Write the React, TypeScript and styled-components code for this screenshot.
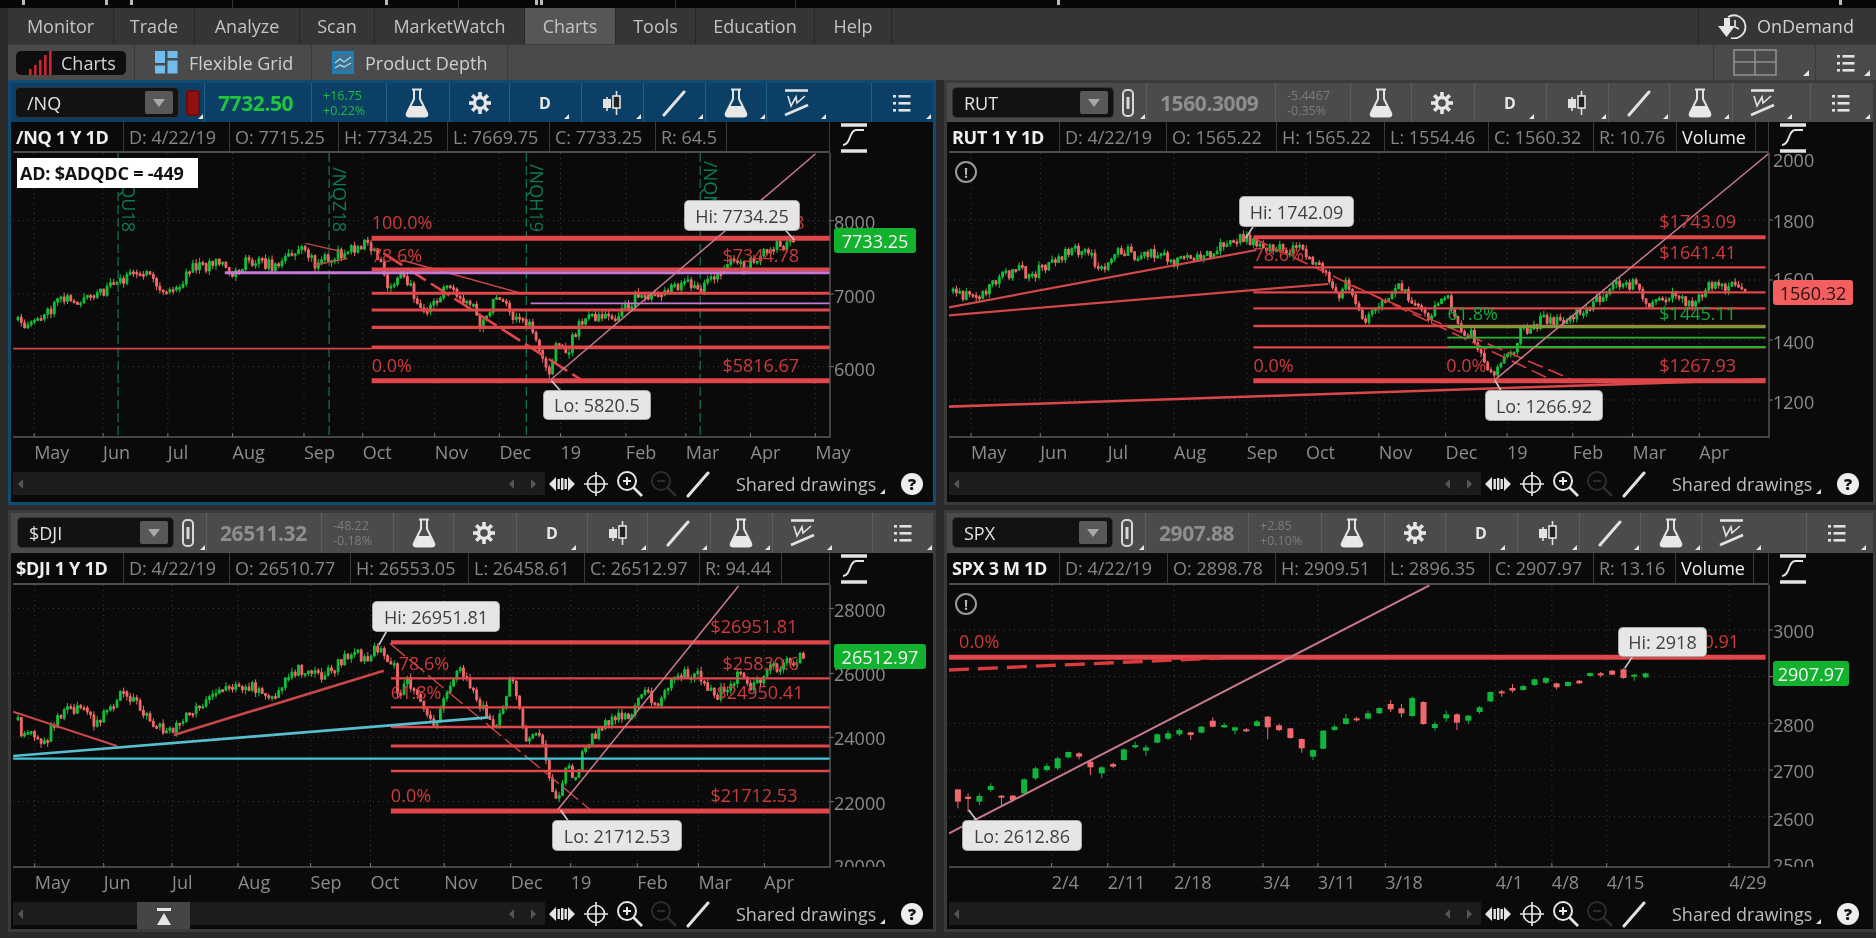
import React from "react";
import styled, { createGlobalStyle } from "styled-components";

const Global = createGlobalStyle`
  html, body { margin: 0; padding: 0; background: #2a2a2a; overflow: hidden; }
  * { box-sizing: border-box; }
  #root { width: 1876px; height: 938px; }
`;

const FONT = `"Open Sans", "Noto Sans", "Liberation Sans", sans-serif`;

const Page = styled.div`
  width: 1876px; height: 938px; background: #2b2b2b; font-family: ${FONT};
  font-size: 18px; color: #c8c8c8; display: flex; flex-direction: column; overflow: hidden;
  filter: blur(0.45px);
`;
const TopStrip = styled.svg`display: block; width: 1876px; height: 8px; background: #060606; flex: none;`;
const Main = styled.div`padding-left: 8px; display: flex; flex-direction: column; flex: 1;`;
const NavBar = styled.div`height: 36px; background: #353535; display: flex; flex: none;`;
const NavTab = styled.div<{ $w: number; $active?: boolean }>`
  width: ${p => p.$w}px; display: flex; align-items: center; justify-content: center;
  color: #c4c4c4; background: ${p => (p.$active ? "#565656" : "transparent")};
  border-right: 1px solid #272727;
`;
const NavSpacer = styled.div`flex: 1;`;
const OnDemandTab = styled.div`
  width: 178px; display: flex; align-items: center; gap: 10px; padding-left: 18px;
  border-left: 1px solid #272727; color: #d0d0d0;
`;
const SubBar = styled.div`height: 36px; background: #4a4a4a; display: flex; flex: none; border-top: 1px solid #3a3a3a;`;
const SubCell = styled.div<{ $w: number }>`
  width: ${p => p.$w}px; display: flex; align-items: center; gap: 11px; padding-left: 20px;
  border-right: 1px solid #3a3a3a; color: #cfcfcf;
`;
const PillCell = styled.div`width: 127px; display: flex; align-items: center; padding-left: 8px; border-right: 1px solid #3a3a3a;`;
const Pill = styled.div`
  width: 110px; height: 24px; background: #0e0e0e; border-radius: 5px; display: flex; align-items: center;
  gap: 9px; padding-left: 12px; color: #d4d4d4;
`;
const LayoutCell = styled.div<{ $w: number; $pr?: number }>`
  position: relative; width: ${p => p.$w}px; display: flex; align-items: center; justify-content: center;
  padding-right: ${p => p.$pr ?? 0}px; border-left: 1px solid #3a3a3a;
`;
const Corner = styled.span`
  position: absolute; right: 6px; bottom: 4px; width: 0; height: 0;
  border-left: 6px solid transparent; border-bottom: 6px solid #e6e6e6;
`;
const PanelGrid = styled.div`
  display: grid; grid-template-columns: 928px 932px; grid-template-rows: 425px 422px;
  column-gap: 8px; row-gap: 5px;
`;
const PanelBox = styled.div<{ $active?: boolean }>`
  border: 3px solid ${p => (p.$active ? "#0f4a70" : "#3b3b3b")}; background: #0a0a0a;
  display: flex; flex-direction: column; overflow: hidden;
`;
const Toolbar = styled.div<{ $active?: boolean; $h: number; $pad: number }>`
  height: ${p => p.$h}px; padding-left: ${p => p.$pad}px; flex: none; display: flex; align-items: stretch;
  background: ${p => (p.$active ? "#0b3f65" : "#4b4b4b")};
  --sep: ${p => (p.$active ? "#20618c" : "#5e5e5e")};
`;
const SymbolBox = styled.div<{ $w: number }>`
  width: ${p => p.$w}px; height: 29px; margin-top: 5px; background: #121212; border-radius: 4px;
  box-shadow: 0 0 0 1px #333; display: flex; align-items: center; justify-content: space-between;
  padding: 0 5px 0 11px; color: #e2e2e2;
`;
const DropBtn = styled.span`
  width: 28px; height: 23px; background: #585858; border-radius: 2px; display: flex; align-items: center; justify-content: center;
  &::after { content: ""; border-left: 6px solid transparent; border-right: 6px solid transparent; border-top: 8px solid #a8a8a8; }
`;
const LockCell = styled.div<{ $w: number }>`
  position: relative; width: ${p => p.$w}px; flex: none; display: flex; align-items: center; padding-left: 8px;
  border-right: 1px solid var(--sep);
`;
const RedLock = styled.span`width: 14px; height: 26px; background: #8f1212; border-radius: 3px; box-shadow: inset 0 0 0 2px #6e0c0c;`;
const CornerSmall = styled.span`
  position: absolute; right: 1px; bottom: 3px; width: 0; height: 0;
  border-left: 5px solid transparent; border-bottom: 5px solid #e6e6e6;
`;
const PriceCell = styled.div<{ $w: number; $live?: boolean }>`
  width: ${p => p.$w}px; flex: none; display: flex; align-items: center; padding-left: 13px;
  border-right: 1px solid var(--sep); font-weight: 700; font-size: 21px; letter-spacing: -0.4px;
  color: ${p => (p.$live ? "#1fc63d" : "#8e8e8e")};
`;
const ChangeCell = styled.div<{ $w: number; $live?: boolean }>`
  width: ${p => p.$w}px; flex: none; display: flex; flex-direction: column; justify-content: center; padding-left: 11px;
  border-right: 1px solid var(--sep); font-size: 12.5px; line-height: 15px;
  color: ${p => (p.$live ? "#22b845" : "#7c7c7c")};
`;
const ToolCell = styled.div<{ $w?: number }>`
  ${p => (p.$w ? `width: ${p.$w}px; flex: none; border-right: 1px solid var(--sep);` : "flex: 1;")}
  display: flex;
`;
const ToolSlot = styled.div<{ $corner?: boolean }>`
  position: relative; width: 60px; display: flex; align-items: center; justify-content: center;
  color: #e2e2e2;
  ${p => p.$corner && `&::after { content: ""; position: absolute; right: 1px; bottom: 3px;
    border-left: 5px solid transparent; border-bottom: 5px solid #e6e6e6; }`}
`;
const DLetter = styled.span`font-weight: 700; font-size: 16px; color: #e8e8e8; margin-left: 10px;`;
const InfoRow = styled.div<{ $h: number }>`height: ${p => p.$h}px; flex: none; display: flex; padding-left: 2px; background: #0a0a0a;`;
const InfoBar = styled.div`display: flex; border-bottom: 2px solid #4c4c4c; flex: none;`;
const InfoCell = styled.div<{ $w: number; $title?: boolean; $white?: boolean }>`
  width: ${p => p.$w}px; flex: none; display: flex; align-items: center; padding-left: ${p => (p.$title ? 3 : 5)}px; white-space: nowrap;
  border-right: 1px solid #3a3a3a; overflow: hidden;
  color: ${p => (p.$title || p.$white ? "#efefef" : "#858585")}; font-weight: ${p => (p.$title ? 700 : 400)};
  font-size: 18px; letter-spacing: ${p => (p.$title ? "-0.3px" : "0")};
`;
const InfoBarFill = styled.div<{ $w: number }>`
  width: ${p => p.$w}px; flex: none; border-bottom: 2px solid #4c4c4c; border-right: 1px solid #3a3a3a;
`;
const SideCol = styled.div`flex: 1; display: flex; align-items: center; padding-left: 10px; background: #0a0a0a; color: #ddd;`;
const ChartArea = styled.div<{ $h: number }>`position: relative; height: ${p => p.$h}px; flex: none;`;
const ChartSvg = styled.svg`
  display: block; font-family: ${FONT}; font-size: 18px;
`;
const Callout = styled.div<{ $l: number; $t: number; $w: number; $h: number }>`
  position: absolute; left: ${p => p.$l}px; top: ${p => p.$t}px; width: ${p => p.$w}px; height: ${p => p.$h}px;
  background: #e6e6e6; color: #3f3f3f; border-radius: 4px; box-shadow: 0 0 0 1px #aaa;
  display: flex; align-items: center; justify-content: center; white-space: nowrap;
`;
const PriceTag = styled.div<{ $l: number; $t: number; $w: number; $up: boolean }>`
  position: absolute; left: ${p => p.$l}px; top: ${p => p.$t}px; width: ${p => p.$w}px; height: 25px;
  background: ${p => (p.$up ? "#12b22f" : "#f35f5f")}; color: ${p => (p.$up ? "#f4f4f4" : "#2a1010")};
  border-radius: 3px; display: flex; align-items: center; justify-content: center; white-space: nowrap;
`;
const AdBox = styled.div`
  position: absolute; left: 6px; top: 5px; width: 181px; height: 30px; background: #fff; color: #111;
  font-weight: 700; font-size: 18px; letter-spacing: -0.2px; display: flex; align-items: center; padding-left: 3px; white-space: nowrap;
`;
const AlertIcon = styled.div`
  position: absolute; left: 8px; top: 8px; width: 22px; height: 22px; border-radius: 50%;
  border: 2px solid #9a9a9a; color: #b8b8b8; display: flex; align-items: center; justify-content: center;
  font-size: 14px; font-weight: 700; background: #0a0a0a;
`;
const ScrollRow = styled.div<{ $h: number }>`height: ${p => p.$h}px; flex: none; display: flex; padding-left: 2px; background: #0a0a0a;`;
const Track = styled.div`
  position: relative; width: 532px; height: 23px; margin-top: 2px; background: #1c1c1c; display: flex; align-items: center;
  padding: 0 9px 0 5px; justify-content: space-between; flex: none;
`;
const ArrowGroup = styled.div`display: flex; gap: 17px;`;
const ArrowL = styled.span`width: 0; height: 0; border-top: 5px solid transparent; border-bottom: 5px solid transparent; border-right: 5px solid #555;`;
const ArrowR = styled.span`width: 0; height: 0; border-top: 5px solid transparent; border-bottom: 5px solid transparent; border-left: 5px solid #555;`;
const ExpandBtn = styled.div`
  position: absolute; left: 124px; top: 0; width: 53px; height: 30px; background: #454545; display: flex;
  align-items: center; justify-content: center;
`;
const BottomTool = styled.div`width: 34px; height: 27px; display: flex; align-items: center; justify-content: center; flex: none; color: #e0e0e0;`;
const SharedLabel = styled.div`margin-left: 21px; height: 27px; display: flex; align-items: center; color: #bdbdbd; white-space: nowrap; width: 148px; position: relative;`;
const HelpBall = styled.div`
  margin: 3px 0 0 17px; width: 22px; height: 22px; border-radius: 50%; background: #eee; color: #111;
  font-weight: 800; font-size: 16px; display: flex; align-items: center; justify-content: center; flex: none;
`;
const MiniTri = styled.span`
  position: absolute; right: -1px; bottom: 3px; border-left: 5px solid transparent; border-bottom: 5px solid #ddd;
`;

/* ---------- icons ---------- */
const Flask = () => (
  <svg width="26" height="30" viewBox="0 0 26 30">
    <path d="M8 1.500h10M10 2v9L3 25c-1 2 0 3.500 2 3.500h16c2 0 3-1.500 2-3.500L16 11V2" fill="none" stroke="#e2e2e2" strokeWidth="2" />
    <path d="M6.500 18h13L24 27c0 1-1 2-3 2H5c-2 0-3-1-3-2z" fill="#e8e8e8" />
  </svg>
);
const Gear = () => (
  <svg width="24" height="24" viewBox="0 0 24 24">
    <circle cx="12" cy="12" r="5.500" fill="none" stroke="#e6e6e6" strokeWidth="3.400" />
    {[0, 45, 90, 135, 180, 225, 270, 315].map(a => (
      <rect key={a} x="10.200" y="1" width="3.600" height="5" fill="#e6e6e6" transform={`rotate(${a} 12 12)`} />
    ))}
  </svg>
);
const CandleIcon = () => (
  <svg width="20" height="28" viewBox="0 0 20 28">
    <path d="M5 8v14" stroke="#e2e2e2" strokeWidth="1.600" />
    <rect x="1" y="10" width="8" height="9" fill="#e2e2e2" />
    <path d="M14.500 2v24" stroke="#e2e2e2" strokeWidth="1.600" />
    <rect x="11" y="7" width="7" height="12" fill="#222" stroke="#e2e2e2" strokeWidth="1.600" />
  </svg>
);
const LineIcon = ({ c = "#e2e2e2" }: { c?: string }) => (
  <svg width="26" height="28" viewBox="0 0 26 28">
    <path d="M3 26L23 3" stroke={c} strokeWidth="3" strokeLinecap="round" />
  </svg>
);
const DrawIcon = () => (
  <svg width="26" height="30" viewBox="0 0 26 30">
    <path d="M1 2.500h23" stroke="#e2e2e2" strokeWidth="2.600" />
    <path d="M4 8l3 10 5-9 1 6 8-7" fill="none" stroke="#e2e2e2" strokeWidth="1.600" />
    <path d="M1 27L24 17" stroke="#e2e2e2" strokeWidth="2.800" />
  </svg>
);
const MenuIcon = () => (
  <svg width="20" height="20" viewBox="0 0 20 20" fill="#e2e2e2">
    {[2, 9, 16].map(y => (
      <g key={y}>
        <rect x="1" y={y} width="3" height="2.600" />
        <rect x="6.500" y={y} width="12" height="2.600" />
      </g>
    ))}
  </svg>
);
const LinkIcon = () => (
  <svg width="14" height="28" viewBox="0 0 14 28">
    <rect x="2" y="1" width="10" height="26" rx="4" fill="none" stroke="#d8d8d8" strokeWidth="2" />
    <rect x="5.500" y="8" width="3" height="12" fill="#d8d8d8" />
  </svg>
);
const StudiesIcon = () => (
  <svg width="28" height="30" viewBox="0 0 28 30">
    <path d="M1 2h26M1 28h26" stroke="#e4e4e4" strokeWidth="3.400" />
    <path d="M3 22c8 0 6-15 13-15 3 0 4 0 8 0" fill="none" stroke="#e4e4e4" strokeWidth="1.800" />
  </svg>
);
const PanIcon = () => (
  <svg width="26" height="18" viewBox="0 0 26 18" fill="#e4e4e4">
    <path d="M0 9L7 2v14zM26 9l-7-7v14z" />
    <rect x="8.500" y="4" width="2.400" height="10" /><rect x="12" y="3" width="2.400" height="12" /><rect x="15.500" y="4" width="2.400" height="10" />
  </svg>
);
const CrossIcon = () => (
  <svg width="24" height="24" viewBox="0 0 24 24" fill="none" stroke="#e4e4e4" strokeWidth="1.700">
    <circle cx="12" cy="12" r="8.500" /><path d="M12 0v24M0 12h24" />
  </svg>
);
const ZoomIcon = ({ plus }: { plus?: boolean }) => {
  const c = plus ? "#e8e8e8" : "#2d2d2d";
  return (
    <svg width="28" height="28" viewBox="0 0 28 28" fill="none" stroke={c} strokeWidth="2">
      <circle cx="11" cy="11" r="9" /><path d="M17 17l9 9" strokeWidth="2.600" /><path d="M7 11h8" />
      {plus && <path d="M11 7v8" />}
    </svg>
  );
};
const ExpandIcon = () => (
  <svg width="16" height="20" viewBox="0 0 16 20" fill="#e6e6e6">
    <rect x="1" y="1" width="14" height="3" /><path d="M8 6l7 12H1z" />
  </svg>
);
const BarsIcon = () => (
  <svg width="24" height="24" viewBox="0 0 24 24">
    {[[1, 18], [6, 14], [11, 9], [16, 4], [21, 0]].map(([x, y]) => (
      <rect key={x} x={x} y={y} width="2.600" height={24 - y} fill="#c9262b" />
    ))}
  </svg>
);
const GridIcon = () => (
  <svg width="23" height="23" viewBox="0 0 23 23" fill="#6fbcee">
    <rect x="0" y="0" width="10" height="12" /><rect x="12.500" y="0" width="10" height="7" />
    <rect x="0" y="14.500" width="10" height="8" /><rect x="12.500" y="9.500" width="10" height="13" />
  </svg>
);
const DepthIcon = () => (
  <svg width="22" height="23" viewBox="0 0 22 23">
    <rect x="0" y="0" width="22" height="23" fill="#1f7fb5" />
    <rect x="3" y="3" width="16" height="17" fill="#3d6f90" />
    <path d="M3 12l5-4 4 3 7-5M3 17l5-3 4 2 7-4" fill="none" stroke="#a8d4ee" strokeWidth="1.400" />
  </svg>
);
const LayoutIcon = () => (
  <svg width="44" height="27" viewBox="0 0 44 27" fill="none" stroke="#8e8e8e" strokeWidth="1.600">
    <rect x="1" y="1" width="42" height="25" /><path d="M22 1v25M1 13h42" />
  </svg>
);
const OnDemandIcon = () => (
  <svg width="30" height="26" viewBox="0 0 30 26" fill="none">
    <path d="M11 4A11.500 11.500 0 1 1 14 25" stroke="#e6e6e6" strokeWidth="1.800" />
    <path d="M18 7v7l4 2" stroke="#e6e6e6" strokeWidth="1.600" />
    <path d="M1 13h6V5h6v8h5l-8.500 11z" fill="#e8e8e8" />
  </svg>
);

/* ---------- chart data ---------- */
type Pt = [number, number];
type Mapper = { x: (v: number) => number; y: (v: number) => number };
const mapper = (right: boolean, bottom: boolean): Mapper => ({
  x: v => (right ? 940 + (v * 936) / 1568 : (v * 940) / 1568),
  y: v => (bottom ? 500 : 170) + v / 3,
});

function genCandles(m: Mapper, trace: Pt[], seed: number) {
  const pts = trace.map(([a, b]) => [m.x(a), m.y(b)]);
  let s = seed;
  const rnd = () => {
    s = (s * 1664525 + 1013904223) % 4294967296;
    return s / 4294967296;
  };
  const at = (x: number) => {
    for (let i = 0; i < pts.length - 1; i++) {
      if (x <= pts[i + 1][0]) {
        const t = (x - pts[i][0]) / (pts[i + 1][0] - pts[i][0]);
        return pts[i][1] + t * (pts[i + 1][1] - pts[i][1]);
      }
    }
    return pts[pts.length - 1][1];
  };
  let green = "";
  let red = "";
  let prev = pts[0][1];
  for (let x = pts[0][0]; x <= pts[pts.length - 1][0]; x += 3.3) {
    const c = at(x) + (rnd() - 0.5) * 11;
    const top = Math.min(prev, c);
    const bot = Math.max(prev, c, top + 2);
    const wt = top - rnd() * 4.5;
    const wb = bot + rnd() * 4.5;
    const d = `M${x.toFixed(1)} ${wt.toFixed(1)}V${wb.toFixed(1)}M${(x - 0.9).toFixed(1)} ${top.toFixed(1)}V${bot.toFixed(1)}H${(x + 0.9).toFixed(1)}V${top.toFixed(1)}Z`;
    if (c < prev) green += d;
    else red += d;
    prev = c;
  }
  return { green, red };
}

type Cnd = [number, number, number, number, number, "g" | "r"];
const spxCandles: Cnd[] = [
  [30,868,905,868,925,"r"],[47,890,897,880,935,"r"],[66,888,905,880,915,"g"],[85,858,870,850,875,"g"],[103,887,889,885,915,"r"],
  [122,887,900,885,905,"r"],[141,838,880,835,885,"g"],[160,805,835,800,840,"g"],[179,798,810,790,815,"g"],[197,775,805,770,810,"g"],
  [215,756,772,755,775,"g"],[233,760,770,757,778,"r"],[252,785,802,780,825,"r"],[271,802,820,798,835,"g"],[290,792,800,788,804,"r"],
  [308,748,780,745,782,"g"],[327,735,742,725,745,"g"],[345,742,752,735,768,"g"],[364,703,728,700,730,"g"],[382,700,716,692,720,"g"],
  [401,690,703,685,708,"g"],[420,697,705,695,720,"r"],[438,680,698,678,700,"g"],[457,662,680,652,682,"r"],[476,675,682,668,684,"g"],
  [494,682,692,680,703,"g"],[513,688,694,684,696,"r"],[531,664,678,660,680,"g"],[549,650,682,648,718,"r"],[568,676,690,672,694,"r"],
  [587,685,714,684,716,"r"],[606,717,745,715,758,"r"],[625,750,770,748,780,"g"],[642,692,746,690,748,"g"],[661,680,690,674,692,"g"],
  [680,655,672,642,674,"g"],[698,655,660,650,665,"r"],[717,640,656,632,658,"g"],[736,624,640,622,642,"g"],[755,612,628,600,636,"r"],
  [773,625,640,612,652,"r"],[791,594,648,590,650,"g"],[810,606,672,604,674,"r"],[829,672,684,665,692,"g"],[848,643,655,632,665,"g"],
  [866,643,668,640,690,"r"],[885,647,662,645,672,"g"],[904,622,636,618,642,"g"],[922,576,604,574,606,"g"],[941,574,580,570,590,"r"],
  [959,564,572,552,578,"r"],[977,558,570,554,572,"g"],[996,538,555,536,558,"g"],[1015,534,548,532,552,"g"],[1033,550,562,548,568,"r"],
  [1052,546,558,544,560,"g"],[1071,542,550,540,552,"r"],[1089,519,528,517,530,"g"],[1107,520,526,516,532,"r"],[1126,512,524,510,526,"r"],
  [1145,508,534,505,536,"r"],[1163,524,526,522,542,"g"],[1182,520,532,518,535,"g"],
];

type Ln = { p: Pt[]; c: string; w: number; d?: string };
const RED = "#e0464a";
const DIM = "#d83c3f";
const PINK = "#c97a8c";
const hl = (x1: number, x2: number, y: number, w: number, c = RED): Ln => ({ p: [[x1, y], [x2, y]], c, w });

type Txt = [number, number, string, string?, boolean?];
type Spec = {
  right: boolean; bottom: boolean; seed: number; trace?: Pt[]; cnds?: Cnd[];
  grid: number[]; ticks: [number, string][]; yl: [string, number][];
  lines: Ln[]; texts: Txt[]; ptrs: [number, number, number, number][];
  callouts: { t: string; b: [number, number, number, number] }[];
  tag: { t: string; x: [number, number]; y: number; up: boolean };
  verticals?: [number, string][]; ad?: boolean; alert?: number;
};

const specs: Spec[] = [
  {
    right: false, bottom: false, seed: 11, ad: true,
    trace: [[30,450],[40,490],[60,440],[75,440],[105,385],[130,395],[160,380],[190,335],[240,305],[270,370],[295,360],[320,295],[365,280],[385,320],[415,270],[460,290],[500,230],[525,280],[570,250],[615,220],[640,290],[650,370],[670,310],[710,430],[750,340],[790,420],[800,480],[830,380],[860,450],[885,460],[915,610],[930,520],[945,550],[965,465],[1000,430],[1030,445],[1060,380],[1110,360],[1150,340],[1170,365],[1200,300],[1220,270],[1240,295],[1280,235],[1325,215]],
    grid: [152, 372, 590],
    ticks: [[57,"May"],[172,"Jun"],[280,"Jul"],[388,"Aug"],[507,"Sep"],[605,"Oct"],[725,"Nov"],[833,"Dec"],[935,"19"],[1044,"Feb"],[1144,"Mar"],[1252,"Apr"],[1360,"May"]],
    yl: [["8000",157],["7000",379],["6000",597]],
    verticals: [[197,"/NQU18"],[549,"/NQZ18"],[878,"/NQH19"],[1168,"/NQM19"]],
    lines: [
      hl(22,620,536,1.6,"#d8474a"),
      { p: [[510,220],[570,245]], c: "#c8484a", w: 1.4 }, { p: [[525,285],[580,265]], c: "#c8484a", w: 1.4 },
      { p: [[670,270],[870,370]], c: "#c8484a", w: 1.4 },
      { p: [[640,250],[970,630]], c: RED, w: 2.6, d: "22 6" },
      hl(620,1385,205,5), hl(620,1385,298,3.6), hl(620,1385,370,3), hl(620,1385,420,3.2), hl(620,1385,472,3.2), hl(620,1385,532,3.6), hl(620,1385,632,5),
      hl(375,1385,308,3,"#c67ad8"), hl(885,1385,400,1.8,"#c67ad8"),
      { p: [[918,630],[1360,-48]], c: PINK, w: 1.5 },
    ],
    texts: [[620,158,"100.0%"],[620,255,"78.6%"],[1205,255,"$7344.78"],[620,585,"0.0%"],[1205,585,"$5816.67"],[1325,158,"8"]],
    ptrs: [[1310,180,1325,210],[920,632,935,663]],
    callouts: [{ t: "Hi: 7734.25", b: [1143,93,1333,180] }, { t: "Lo: 5820.5", b: [908,663,1085,748] }],
    tag: { t: "7733.25", x: [834,916], y: 228, up: true },
  },
  {
    right: true, bottom: false, seed: 23, alert: 1,
    trace: [[22,365],[55,385],[70,375],[95,325],[130,300],[155,315],[190,265],[240,235],[270,295],[305,240],[330,255],[375,245],[385,280],[445,260],[470,220],[510,205],[550,235],[610,240],[640,300],[665,385],[680,335],[710,450],[730,430],[765,350],[800,410],[815,445],[850,380],[875,480],[895,500],[925,625],[935,575],[960,560],[970,490],[1015,445],[1040,460],[1090,405],[1130,345],[1165,345],[1190,405],[1230,365],[1250,410],[1290,350],[1335,345],[1350,365]],
    grid: [150,330,510,690],
    ticks: [[52,"May"],[168,"Jun"],[281,"Jul"],[392,"Aug"],[514,"Sep"],[613,"Oct"],[735,"Nov"],[847,"Dec"],[950,"19"],[1060,"Feb"],[1160,"Mar"],[1272,"Apr"]],
    yl: [["2000",-30],["1800",155],["1600",328],["1400",518],["1200",698]],
    lines: [
      { p: [[15,412],[530,240]], c: "#d0484a", w: 2.2 }, { p: [[15,436],[650,342]], c: "#d0484a", w: 2.2 },
      { p: [[525,205],[1025,630]], c: DIM, w: 1.6, d: "16 6" }, { p: [[680,340],[1060,630]], c: DIM, w: 1.6, d: "16 6" },
      hl(525,1383,202,4), hl(525,1383,292,2.4), hl(525,1383,367,2.4), hl(525,1383,415,2.4), hl(525,1383,468,2.4), hl(525,1383,532,2.4), hl(525,1383,632,5),
      hl(850,1383,470,3,"#7f9a3c"), hl(850,1383,503,1.8,"#27b52f"), hl(850,1383,531,1.8,"#27b52f"),
      { p: [[15,710],[1383,628]], c: "#d8484a", w: 2.6 },
      { p: [[928,632],[1355,0],[1440,-126]], c: PINK, w: 1.5 },
    ],
    texts: [[1205,155,"$1743.09"],[1205,248,"$1641.41"],[525,253,"78.6%"],[850,430,"61.8%","#15a83a"],[1205,430,"$1445.11","#15a83a"],[525,585,"0.0%"],[848,585,"0.0%"],[1205,585,"$1267.93"]],
    ptrs: [[525,168,512,205],[930,632,940,663]],
    callouts: [{ t: "Hi: 1742.09", b: [503,82,693,168] }, { t: "Lo: 1266.92", b: [915,663,1110,750] }],
    tag: { t: "1560.32", x: [1773,1853], y: 280, up: false },
  },
  {
    right: false, bottom: true, seed: 37,
    trace: [[30,660],[35,725],[50,680],[70,740],[100,640],[130,620],[160,670],[205,580],[230,610],[260,680],[285,700],[315,630],[350,600],[380,565],[420,555],[450,600],[495,510],[540,530],[590,450],[610,480],[630,440],[660,510],[665,610],[680,540],[725,670],[765,500],[800,610],[825,680],[855,525],[875,710],[900,700],[930,925],[945,790],[962,840],[975,740],[1020,650],[1050,650],[1075,580],[1095,610],[1130,525],[1165,520],[1195,590],[1235,520],[1255,570],[1280,510],[1345,465]],
    grid: [325,520,712,905],
    ticks: [[58,"May"],[173,"Jun"],[287,"Jul"],[397,"Aug"],[518,"Sep"],[618,"Oct"],[741,"Nov"],[852,"Dec"],[952,"19"],[1063,"Feb"],[1165,"Mar"],[1275,"Apr"]],
    yl: [["28000",330],["26000",523],["24000",716],["22000",910],["20000",1100]],
    lines: [
      { p: [[22,635],[195,738]], c: "#c8484a", w: 2 }, { p: [[290,705],[640,512]], c: "#c8484a", w: 2.6 },
      { p: [[650,430],[985,930]], c: "#c8484a", w: 1.4, d: "20 5" },
      hl(652,1385,427,4.4), hl(652,1385,535,2.4), hl(652,1385,622,2.4), hl(652,1385,681,2.4), hl(652,1385,738,3), hl(652,1385,813,2.4), hl(652,1385,933,5),
      { p: [[22,768],[815,652]], c: "#57bfcc", w: 2.6 }, hl(22,1385,776,2.4,"#45c6d8"),
      { p: [[930,930],[1232,258]], c: PINK, w: 1.5 },
    ],
    texts: [[1185,378,"$26951.81"],[665,490,"78.6%"],[1205,490,"$25830.6"],[652,578,"61.8%"],[1195,578,"$24950.41"],[652,885,"0.0%"],[1185,885,"$21712.53"]],
    ptrs: [[645,393,632,435],[935,930,948,963]],
    callouts: [{ t: "Hi: 26951.81", b: [622,307,832,393] }, { t: "Lo: 21712.53", b: [923,963,1137,1050] }],
    tag: { t: "26512.97", x: [834,926], y: 644, up: true },
  },
  {
    right: true, bottom: true, seed: 41, cnds: spxCandles, alert: 1,
    grid: [390,530,670,810,950],
    ticks: [[187,"2/4"],[281,"2/11"],[392,"2/18"],[541,"3/4"],[633,"3/11"],[746,"3/18"],[931,"4/1"],[1025,"4/8"],[1117,"4/15"],[1322,"4/29"]],
    yl: [["3000",395],["2900",530],["2800",677],["2700",815],["2600",957],["2500",1095]],
    lines: [
      hl(15,1383,472,5), { p: [[15,510],[470,474]], c: DIM, w: 3.4, d: "20 9" },
      { p: [[15,1000],[820,256]], c: PINK, w: 2 },
    ],
    texts: [[32,425,"0.0%"],[1210,425,"$2950.91"]],
    ptrs: [[1160,470,1147,505],[62,963,48,930]],
    callouts: [{ t: "Hi: 2918", b: [1137,385,1282,470] }, { t: "Lo: 2612.86", b: [38,963,236,1050] }],
    tag: { t: "2907.97", x: [1773,1849], y: 661, up: true },
  },
];

const GREEN = "#12c03a";
const CRED = "#f2686a";

const Chart = ({ spec, h }: { spec: Spec; h: number }) => {
  const m = mapper(spec.right, spec.bottom);
  const ox = spec.right ? 947 : 11;
  const oy = spec.bottom ? 585 : 153;
  const w = spec.right ? 926 : 922;
  const cr = spec.right ? 1769 : 830;
  const cl = spec.right ? 949 : 13;
  const cb = spec.bottom ? 867 : 437;
  const clip = `clip${spec.seed}`;
  const clipY = `clipy${spec.seed}`;
  const { green, red } = spec.trace ? genCandles(m, spec.trace, spec.seed) : { green: "", red: "" };
  return (
    <ChartArea $h={h}>
      <ChartSvg width={w} height={h} viewBox={`${ox} ${oy} ${w} ${h}`}>
        <defs>
          <clipPath id={clip}><rect x={cl} y={oy} width={cr - cl} height={cb - oy} /></clipPath>
          <clipPath id={clipY}><rect x={cr} y={oy} width={100} height={cb - oy} /></clipPath>
        </defs>
        <g stroke="#3c3c3c" strokeWidth="1" strokeDasharray="1 4">
          {spec.grid.map(g => <line key={g} x1={cl} x2={cr} y1={m.y(g)} y2={m.y(g)} />)}
          {spec.ticks.map(([t]) => <line key={t} x1={m.x(t)} x2={m.x(t)} y1={oy} y2={cb} />)}
        </g>
        <g clipPath={`url(#${clip})`}>
          {spec.verticals?.map(([x, t]) => {
            const px = m.x(x);
            return (
              <g key={t}>
                <line x1={px} x2={px} y1={oy} y2={cb} stroke="#0f7a50" strokeWidth="1.2" strokeDasharray="9 4" />
                <text transform={`translate(${px + 4} 232) rotate(90)`} textAnchor="end" fill="#0f7a50">{t}</text>
              </g>
            );
          })}
          {green && <path d={green} fill={GREEN} stroke={GREEN} strokeWidth="1" />}
          {red && <path d={red} fill={CRED} stroke={CRED} strokeWidth="1" />}
          {spec.cnds?.map(([x, t, b, wt, wb, c]) => {
            const col = c === "g" ? "#10b53c" : "#f0686c";
            const px = m.x(x);
            return (
              <g key={x}>
                <line x1={px} x2={px} y1={m.y(wt)} y2={m.y(wb)} stroke={col} strokeWidth="1" />
                <rect x={px - 3} y={m.y(t)} width="6" height={Math.max(2, (b - t) / 3)} fill={col} />
              </g>
            );
          })}
          {spec.lines.map((l, i) => (
            <polyline key={i} points={l.p.map(([a, b]) => `${m.x(a)},${m.y(b)}`).join(" ")}
              fill="none" stroke={l.c} strokeWidth={l.w} strokeDasharray={l.d} />
          ))}
          {spec.texts.map(([x, y, t, c]) => (
            <text key={t + x} x={m.x(x)} y={m.y(y) + 6.5} fill={c ?? "#cf3a3c"}>{t}</text>
          ))}
          {spec.ptrs.map(([a, b, c, d], i) => (
            <line key={i} x1={m.x(a)} y1={m.y(b)} x2={m.x(c)} y2={m.y(d)} stroke="#cfcfcf" strokeWidth="1.6" />
          ))}
        </g>
        <path d={`M${cl} ${cb}H${cr}V${oy}`} fill="none" stroke="#5a5a5a" strokeWidth="1.4" />
        {spec.ticks.map(([t]) => <line key={t} x1={m.x(t)} x2={m.x(t)} y1={cb - 4} y2={cb} stroke="#777" />)}
        {spec.grid.map(g => <line key={g} x1={cr} x2={cr + 4} y1={m.y(g)} y2={m.y(g)} stroke="#777" />)}
        <g clipPath={`url(#${clipY})`} fill="#8c8c8c">
          {spec.yl.map(([t, y]) => <text key={t} x={cr + 4} y={m.y(y) + 6.5}>{t}</text>)}
        </g>
        <g fill="#8c8c8c">
          {spec.ticks.map(([x, t]) => <text key={t + x} x={m.x(x)} y={cb + 22}>{t}</text>)}
        </g>
      </ChartSvg>
      {spec.ad && <AdBox>AD: $ADQDC = -449</AdBox>}
      {spec.alert && <AlertIcon>!</AlertIcon>}
      {spec.callouts.map(c => (
        <Callout key={c.t} $l={Math.round(m.x(c.b[0]) - ox)} $t={Math.round(m.y(c.b[1]) - oy)}
          $w={Math.round(m.x(c.b[2]) - m.x(c.b[0]))} $h={Math.round((c.b[3] - c.b[1]) / 3)}>{c.t}</Callout>
      ))}
      <PriceTag $l={spec.tag.x[0] - ox} $t={spec.tag.y - oy} $w={spec.tag.x[1] - spec.tag.x[0]} $up={spec.tag.up}>{spec.tag.t}</PriceTag>
    </ChartArea>
  );
};

/* ---------- panels ---------- */
type PanelCfg = {
  active?: boolean; sym: string; symW: number; pad: number; lockW: number; price: string; priceW: number;
  ch: [string, string]; chW: number; tools: number[]; title: string; info: [string, number][]; volume?: number;
  spec: Spec; heights: [number, number, number, number]; expand?: boolean;
};

const panels: PanelCfg[] = [
  {
    active: true, sym: "/NQ", symW: 162, pad: 5, lockW: 27, price: "7732.50", priceW: 107, ch: ["+16.75", "+0.22%"], chW: 75,
    tools: [63, 60, 72, 62, 62, 61, 105], title: "/NQ 1 Y 1D",
    info: [["D: 4/22/19", 106], ["O: 7715.25", 109], ["H: 7734.25", 109], ["L: 7669.75", 102], ["C: 7733.25", 106], ["R: 64.5", 71]],
    spec: specs[0], heights: [39, 31, 317, 32],
  },
  {
    sym: "RUT", symW: 160, pad: 6, lockW: 34, price: "1560.3009", priceW: 129, ch: ["-5.4467", "-0.35%"], chW: 75,
    tools: [61, 63, 72, 62, 61, 63, 78], title: "RUT 1 Y 1D",
    info: [["D: 4/22/19", 107], ["O: 1565.22", 110], ["H: 1565.22", 108], ["L: 1554.46", 104], ["C: 1560.32", 105], ["R: 10.76", 83]],
    volume: 79, spec: specs[1], heights: [39, 31, 317, 32],
  },
  {
    sym: "$DJI", symW: 157, pad: 7, lockW: 34, price: "26511.32", priceW: 115, ch: ["-48.22", "-0.18%"], chW: 72,
    tools: [60, 63, 71, 60, 63, 62, 100], title: "$DJI 1 Y 1D",
    info: [["D: 4/22/19", 106], ["O: 26510.77", 121], ["H: 26553.05", 118], ["L: 26458.61", 116], ["C: 26512.97", 115], ["R: 94.44", 82]],
    spec: specs[2], heights: [40, 32, 315, 29], expand: true,
  },
  {
    sym: "SPX", symW: 159, pad: 6, lockW: 34, price: "2907.88", priceW: 103, ch: ["+2.85", "+0.10%"], chW: 73,
    tools: [63, 61, 72, 62, 61, 61, 105], title: "SPX 3 M 1D",
    info: [["D: 4/22/19", 108], ["O: 2898.78", 108], ["H: 2909.51", 109], ["L: 2896.35", 105], ["C: 2907.97", 104], ["R: 13.16", 82]],
    volume: 78, spec: specs[3], heights: [40, 32, 315, 29],
  },
];

const Panel = ({ cfg }: { cfg: PanelCfg }) => {
  const icons = [<Flask />, <Gear />, <DLetter>D</DLetter>, <CandleIcon />, <LineIcon />, <Flask />, <DrawIcon />];
  const right = cfg.spec.right;
  return (
    <PanelBox $active={cfg.active}>
      <Toolbar $active={cfg.active} $h={cfg.heights[0]} $pad={cfg.pad}>
        <SymbolBox $w={cfg.symW}>{cfg.sym}<DropBtn /></SymbolBox>
        <LockCell $w={cfg.lockW}>
          {cfg.active ? <RedLock /> : <LinkIcon />}
          <CornerSmall />
        </LockCell>
        <PriceCell $w={cfg.priceW} $live={cfg.active}>{cfg.price}</PriceCell>
        <ChangeCell $w={cfg.chW} $live={cfg.active}><span>{cfg.ch[0]}</span><span>{cfg.ch[1]}</span></ChangeCell>
        {cfg.tools.map((w, i) => (
          <ToolCell key={i} $w={w}>
            <ToolSlot $corner={i > 1}>{icons[i]}</ToolSlot>
          </ToolCell>
        ))}
        <ToolCell><ToolSlot $corner><MenuIcon /></ToolSlot></ToolCell>
      </Toolbar>
      <InfoRow $h={cfg.heights[1]}>
        <InfoBar>
          <InfoCell $w={111} $title>{cfg.title}</InfoCell>
          {cfg.info.map(([t, w]) => <InfoCell key={t} $w={w}>{t}</InfoCell>)}
          {cfg.volume ? <InfoCell $w={cfg.volume} $white>Volume</InfoCell> : null}
        </InfoBar>
        <InfoBarFill $w={(right ? 1769 : 830) - ((right ? 949 : 13) + 111 + cfg.info.reduce((a, [, w]) => a + w, 0) + (cfg.volume ?? 0))} />
        <SideCol><StudiesIcon /></SideCol>
      </InfoRow>
      <Chart spec={cfg.spec} h={cfg.heights[2]} />
      <ScrollRow $h={cfg.heights[3]}>
        <Track>
          <ArrowL />
          {cfg.expand && <ExpandBtn><ExpandIcon /></ExpandBtn>}
          <ArrowGroup><ArrowL /><ArrowR /></ArrowGroup>
        </Track>
        <BottomTool><PanIcon /></BottomTool>
        <BottomTool><CrossIcon /></BottomTool>
        <BottomTool><ZoomIcon plus /></BottomTool>
        <BottomTool><ZoomIcon /></BottomTool>
        <BottomTool><LineIcon /></BottomTool>
        <SharedLabel>Shared drawings<MiniTri /></SharedLabel>
        <HelpBall>?</HelpBall>
      </ScrollRow>
    </PanelBox>
  );
};

const tabs: [string, number][] = [
  ["Monitor", 106], ["Trade", 81], ["Analyze", 105], ["Scan", 75], ["MarketWatch", 150],
  ["Charts", 91], ["Tools", 80], ["Education", 119], ["Help", 77],
];
const topMarks = [22, 105, 130, 385, 535, 540, 1057, 1839];
const topDividers = [232, 458, 675, 795];

export default function App() {
  return (
    <Page>
      <Global />
      <TopStrip viewBox="0 0 1876 8">
        {topDividers.map(x => <rect key={x} x={x} y="0" width="1" height="8" fill="#333" />)}
        {topMarks.map(x => <rect key={x} x={x} y="0" width="3" height="5" fill="#bbb" />)}
      </TopStrip>
      <Main>
        <NavBar>
          {tabs.map(([t, w]) => <NavTab key={t} $w={w} $active={t === "Charts"}>{t}</NavTab>)}
          <NavSpacer />
          <OnDemandTab><OnDemandIcon />OnDemand</OnDemandTab>
        </NavBar>
        <SubBar>
          <PillCell><Pill><BarsIcon />Charts</Pill></PillCell>
          <SubCell $w={177}><GridIcon />Flexible Grid</SubCell>
          <SubCell $w={196}><DepthIcon />Product Depth</SubCell>
          <NavSpacer />
          <LayoutCell $w={102} $pr={20}><LayoutIcon /><Corner /></LayoutCell>
          <LayoutCell $w={61}><MenuIcon /><Corner /></LayoutCell>
        </SubBar>
        <PanelGrid>
          {panels.map(p => <Panel key={p.sym} cfg={p} />)}
        </PanelGrid>
      </Main>
    </Page>
  );
}
